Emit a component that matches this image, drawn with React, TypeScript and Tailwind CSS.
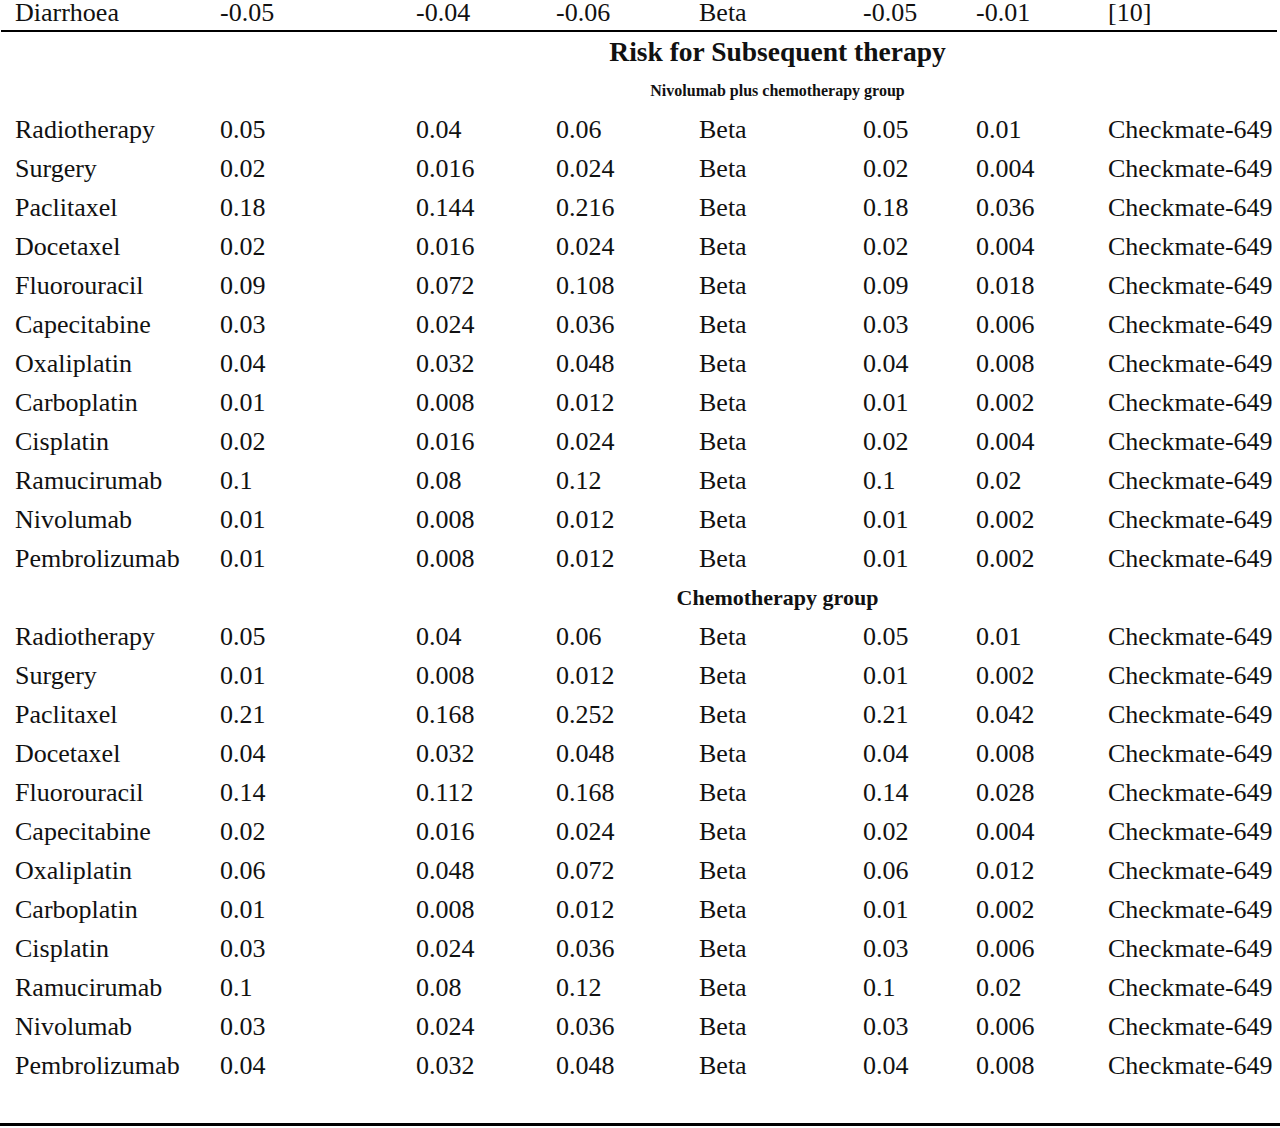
const cols = "grid grid-cols-[205px_196px_140px_143px_164px_113px_132px_1fr]";

const nivo = [
  ["Radiotherapy", "0.05", "0.04", "0.06", "Beta", "0.05", "0.01"],
  ["Surgery", "0.02", "0.016", "0.024", "Beta", "0.02", "0.004"],
  ["Paclitaxel", "0.18", "0.144", "0.216", "Beta", "0.18", "0.036"],
  ["Docetaxel", "0.02", "0.016", "0.024", "Beta", "0.02", "0.004"],
  ["Fluorouracil", "0.09", "0.072", "0.108", "Beta", "0.09", "0.018"],
  ["Capecitabine", "0.03", "0.024", "0.036", "Beta", "0.03", "0.006"],
  ["Oxaliplatin", "0.04", "0.032", "0.048", "Beta", "0.04", "0.008"],
  ["Carboplatin", "0.01", "0.008", "0.012", "Beta", "0.01", "0.002"],
  ["Cisplatin", "0.02", "0.016", "0.024", "Beta", "0.02", "0.004"],
  ["Ramucirumab", "0.1", "0.08", "0.12", "Beta", "0.1", "0.02"],
  ["Nivolumab", "0.01", "0.008", "0.012", "Beta", "0.01", "0.002"],
  ["Pembrolizumab", "0.01", "0.008", "0.012", "Beta", "0.01", "0.002"],
];

const chemo = [
  ["Radiotherapy", "0.05", "0.04", "0.06", "Beta", "0.05", "0.01"],
  ["Surgery", "0.01", "0.008", "0.012", "Beta", "0.01", "0.002"],
  ["Paclitaxel", "0.21", "0.168", "0.252", "Beta", "0.21", "0.042"],
  ["Docetaxel", "0.04", "0.032", "0.048", "Beta", "0.04", "0.008"],
  ["Fluorouracil", "0.14", "0.112", "0.168", "Beta", "0.14", "0.028"],
  ["Capecitabine", "0.02", "0.016", "0.024", "Beta", "0.02", "0.004"],
  ["Oxaliplatin", "0.06", "0.048", "0.072", "Beta", "0.06", "0.012"],
  ["Carboplatin", "0.01", "0.008", "0.012", "Beta", "0.01", "0.002"],
  ["Cisplatin", "0.03", "0.024", "0.036", "Beta", "0.03", "0.006"],
  ["Ramucirumab", "0.1", "0.08", "0.12", "Beta", "0.1", "0.02"],
  ["Nivolumab", "0.03", "0.024", "0.036", "Beta", "0.03", "0.006"],
  ["Pembrolizumab", "0.04", "0.032", "0.048", "Beta", "0.04", "0.008"],
];

const Row = ({ cells }: { cells: string[] }) => (
  <div className={`${cols} h-[39px] items-center pl-[15px] leading-none`}>
    {cells.map((c, i) => (
      <span key={i} className="whitespace-nowrap">
        {c}
      </span>
    ))}
  </div>
);

export default function App() {
  return (
    <div className="w-[1280px] h-[1128px] bg-white text-[#111] text-[26px] font-['Liberation_Serif','Times_New_Roman',serif] overflow-hidden">
      <div className={`${cols} h-[25px] items-center pl-[15px] leading-[25px]`}>
        {["Diarrhoea", "-0.05", "-0.04", "-0.06", "Beta", "-0.05", "-0.01", "[10]"].map((c, i) => (
          <span key={i}>{c}</span>
        ))}
      </div>
      <div className="mt-[5px] h-[2px] bg-black ml-[1px] mr-[3px]" />
      <div className="h-[40px] flex items-center pl-[275px] justify-center">
        <span className="font-bold text-[27.5px] leading-none">Risk for Subsequent therapy</span>
      </div>
      <div className="h-[38px] flex items-center pl-[275px] justify-center">
        <span className="font-bold text-[16px] leading-none">Nivolumab plus chemotherapy group</span>
      </div>
      {nivo.map((r, i) => (
        <Row key={i} cells={[...r, "Checkmate-649"]} />
      ))}
      <div className="h-[39px] flex items-center pl-[275px] justify-center">
        <span className="font-bold text-[22px] leading-none">Chemotherapy group</span>
      </div>
      {chemo.map((r, i) => (
        <Row key={i} cells={[...r, "Checkmate-649"]} />
      ))}
      <div className="mt-[38px] h-[3px] bg-black" />
    </div>
  );
}
